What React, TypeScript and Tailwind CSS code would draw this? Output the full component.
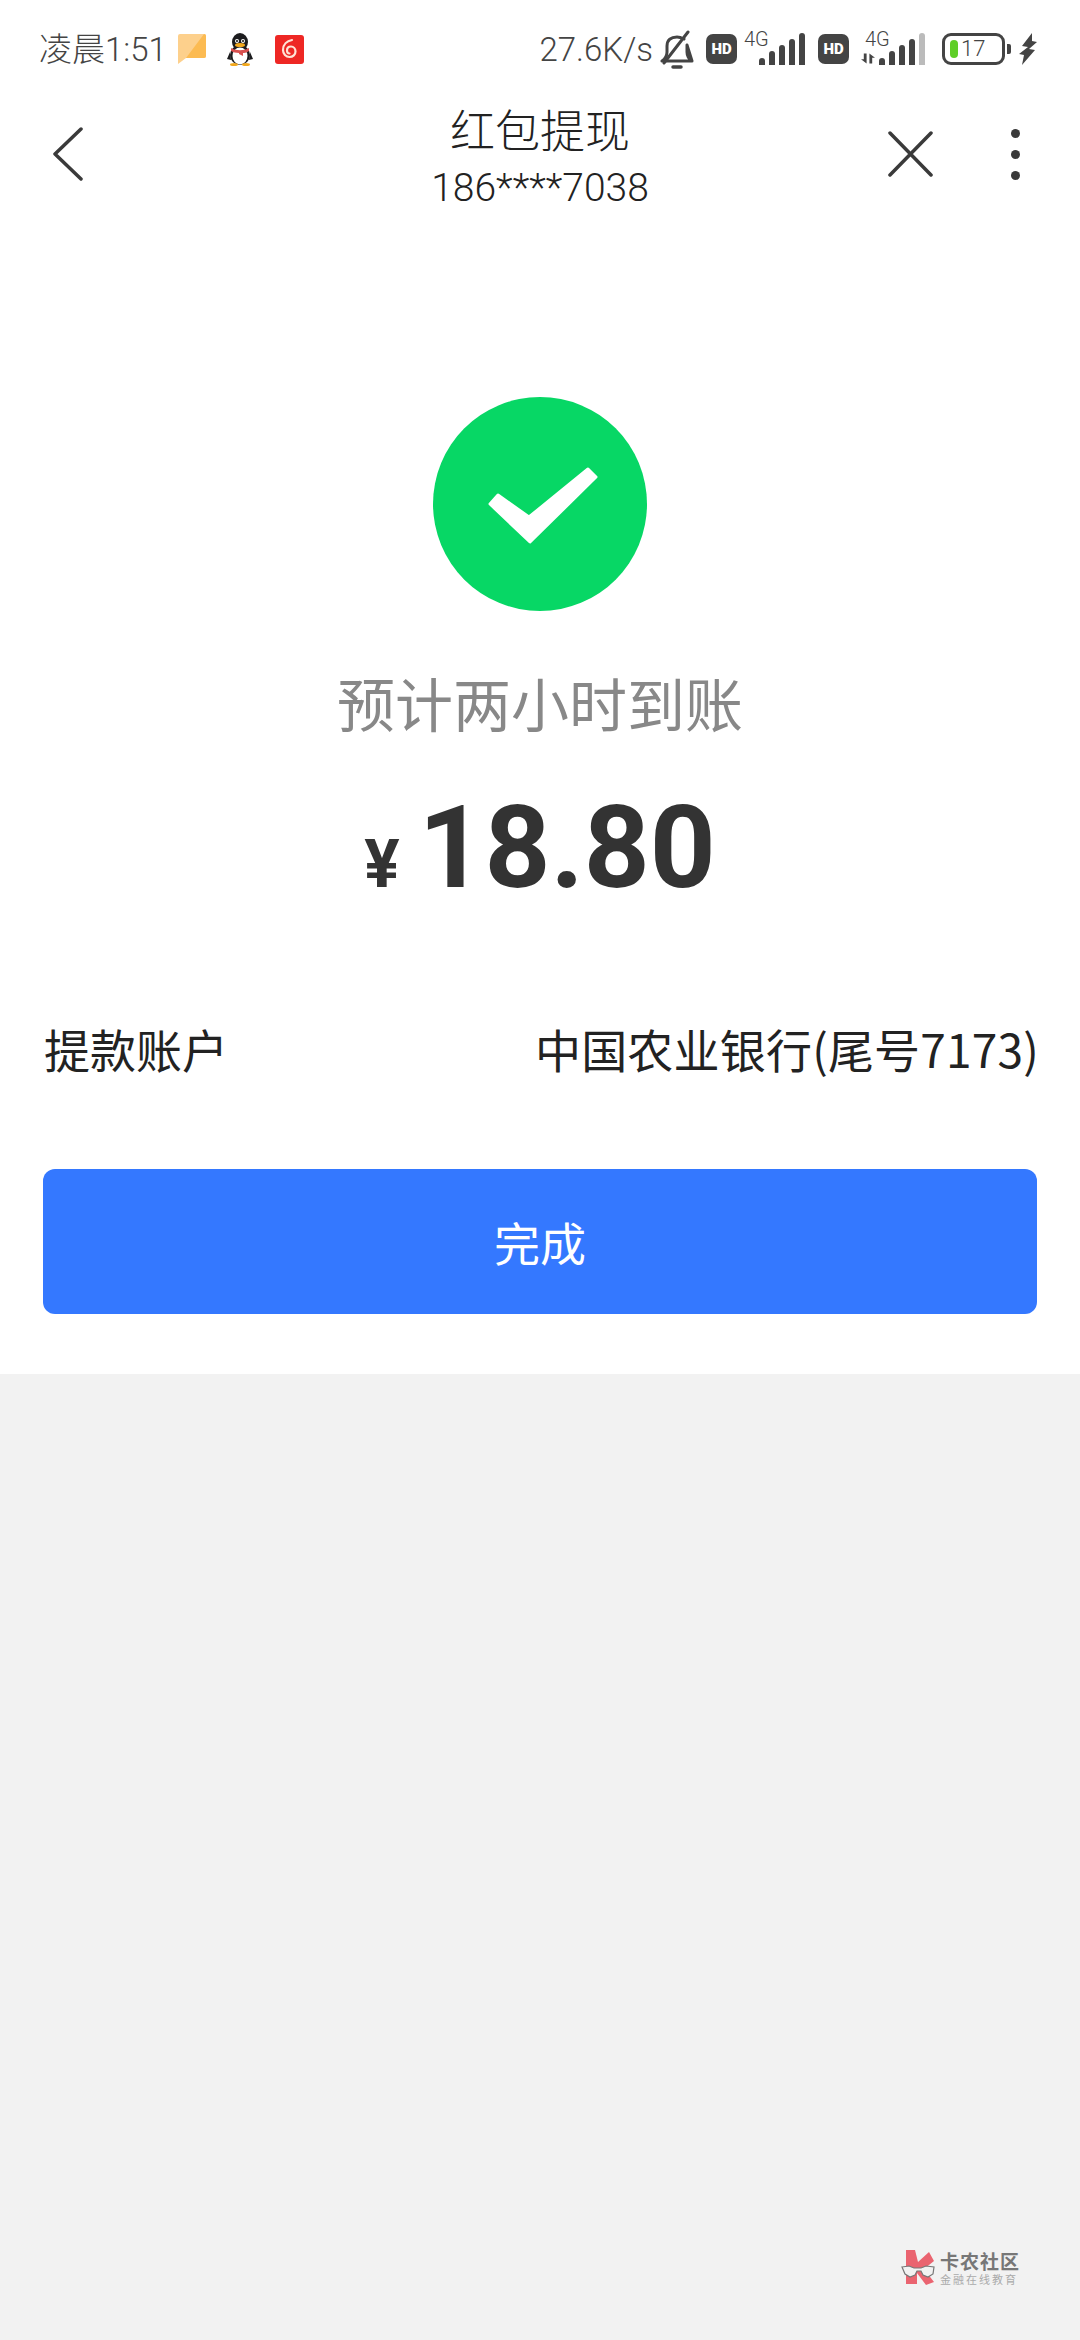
const signalBars = [7, 14, 20, 26, 32];

function HdBadge() {
  return (
    <div className="flex h-[30px] w-[31px] items-center justify-center rounded-[7px] bg-[#444] text-[15px] leading-none font-black text-white">
      HD
    </div>
  );
}

function Signal({ arrows, lastDim }: { arrows?: boolean; lastDim?: boolean }) {
  return (
    <div className="relative flex h-[32px] items-end gap-[4px]">
      <span className={arrows ? "absolute top-[-4px] left-[4px] text-[20px] leading-none font-light text-[#444]" : "absolute top-[-4px] left-[-15px] text-[20px] leading-none font-light text-[#444]"}>
        4G
      </span>
      {arrows && (
        <svg viewBox="0 0 20 14" className="mb-[1px] h-[11px] w-[14px]" fill="#444">
          <path d="M8 0v14L0 8h4V0zM12 0l8 6h-4v8h-4z" />
        </svg>
      )}
      {signalBars.map((h, i) => (
        <span
          key={i}
          className={lastDim && i === 4 ? "w-[6px] rounded-t-[3px] bg-[#bbb]" : "w-[6px] rounded-t-[3px] bg-[#444]"}
          style={{ height: h }}
        />
      ))}
    </div>
  );
}

function StatusBar() {
  return (
    <div className="flex h-[98px] items-center justify-between pr-[43px] pl-[39px] font-['Roboto','Noto_Sans_CJK_SC',sans-serif] text-[#444]">
      <div className="flex items-center">
        <span className="text-[33px] leading-none font-light">凌晨1:51</span>
        <svg viewBox="0 0 28 30" className="ml-[11px] h-[30px] w-[28px]">
          <path d="M2 0h24a2 2 0 0 1 2 2v20a2 2 0 0 1-2 2H8l-8 6V2a2 2 0 0 1 2-2z" fill="#fdd08c" />
          <path d="M26 0a2 2 0 0 1 2 2v20a2 2 0 0 1-2 2H8z" fill="#fcbb52" />
        </svg>
        <svg viewBox="0 0 26 33" className="ml-[21px] h-[33px] w-[26px]">
          <ellipse cx="13" cy="9" rx="8" ry="9" fill="#1c1c1e" />
          <ellipse cx="13" cy="22" rx="10" ry="10" fill="#1c1c1e" />
          <ellipse cx="13" cy="23" rx="7.500" ry="8.500" fill="#fff" />
          <circle cx="10" cy="8" r="2" fill="#fff" />
          <circle cx="16" cy="8" r="2" fill="#fff" />
          <circle cx="10" cy="8" r="1" fill="#111" />
          <circle cx="16" cy="8" r="1" fill="#111" />
          <ellipse cx="13" cy="12" rx="5" ry="2" fill="#f2a81d" />
          <path d="M4 15c5 3 13 3 18 0v3c-3 2-5 2-6 2v3l-4-2v-1c-3 0-6-1-8-2z" fill="#d8504f" />
          <ellipse cx="7" cy="31.500" rx="4" ry="1.500" fill="#f2a81d" />
          <ellipse cx="19" cy="31.500" rx="4" ry="1.500" fill="#f2a81d" />
          <path d="M3 19l-3 7 4 1zM23 19l3 7-4 1z" fill="#1c1c1e" />
        </svg>
        <svg viewBox="0 0 29 29" className="ml-[22px] h-[29px] w-[29px]">
          <rect width="29" height="29" rx="3" fill="#ee2724" />
          <path d="M17 5c-5 1-9 4.500-9 10 0 4 3 7 6.500 7s6-2.500 6-5.500-2-5-4.500-5-4 1.800-4 4c0 1.500 1 3 2.500 3" fill="none" stroke="#ffe3d6" strokeWidth="2.200" strokeLinecap="round" />
        </svg>
      </div>
      <div className="flex items-center">
        <span className="text-[33px] leading-none font-light">27.6K/s</span>
        <svg viewBox="0 0 34 39" className="ml-[7px] h-[39px] w-[34px]" fill="none" stroke="#444" strokeWidth="3" strokeLinecap="round" strokeLinejoin="round">
          <path d="M2 31c3-2 5-5 5-9v-6c0-6 4-9 10-9 3 0 5 1 7 2M27 15v7c0 4 2 7 5 9zM2 31h30" />
          <path d="M4 33L28 2" />
          <path d="M13 37h8" strokeWidth="3.500" />
        </svg>
        <div className="ml-[12px]">
          <HdBadge />
        </div>
        <div className="ml-[22px]">
          <Signal />
        </div>
        <div className="ml-[13px]">
          <HdBadge />
        </div>
        <div className="ml-[12px]">
          <Signal arrows lastDim />
        </div>
        <div className="ml-[17px] flex h-[32px] w-[63px] items-center rounded-[9px] border-[3px] border-[#444] pl-[5px]">
          <span className="h-[18px] w-[8px] rounded-[4px] bg-[#5fce27]" />
          <span className="ml-[3px] text-[22px] leading-none font-light">17</span>
        </div>
        <span className="ml-[2px] h-[10px] w-[4px] rounded-r-[2px] bg-[#444]" />
        <svg viewBox="0 0 18 32" className="ml-[8px] h-[32px] w-[18px]" fill="#444">
          <path d="M13 0L3 13l6 1-9 7 5 1-2 10 13-15-6-1 8-7-5-1z" />
        </svg>
      </div>
    </div>
  );
}

function NavBar() {
  return (
    <div className="relative flex h-[112px] items-center justify-between pr-[60px] pl-[53px]">
      <svg viewBox="0 0 30 54" className="h-[54px] w-[30px]" fill="none" stroke="#3a3a3a" strokeWidth="3.500" strokeLinecap="round" strokeLinejoin="round">
        <path d="M28 2L2 27l26 25" />
      </svg>
      <div className="absolute inset-x-0 top-[3px] flex flex-col items-center text-[#222]">
        <span className="text-[45px] leading-[56px] font-light">红包提现</span>
        <span className="mt-[6px] font-['Roboto','Noto_Sans_CJK_SC',sans-serif] text-[39px] leading-[50px] font-light">186****7038</span>
      </div>
      <div className="flex items-center">
        <svg viewBox="0 0 45 46" className="h-[46px] w-[45px]" fill="none" stroke="#3a3a3a" strokeWidth="3.500" strokeLinecap="round">
          <path d="M2 2l41 42M43 2L2 44" />
        </svg>
        <div className="ml-[78px] flex flex-col gap-[12px]">
          <span className="h-[9px] w-[9px] rounded-full bg-[#3a3a3a]" />
          <span className="h-[9px] w-[9px] rounded-full bg-[#3a3a3a]" />
          <span className="h-[9px] w-[9px] rounded-full bg-[#3a3a3a]" />
        </div>
      </div>
    </div>
  );
}

function Watermark() {
  return (
    <div className="flex items-center justify-end pt-[876px] pr-[60px]">
      <svg viewBox="0 0 36 36" className="h-[36px] w-[36px]">
        <path d="M5 0h9l3 12L28 2l5 9-10 8 10 13-8 3-9-12v11H5z" fill="#ea6470" />
        <path d="M1 17l7-1 5 2 7 0 5-2 8 1-1 7-5 3-5-2-2-4-4 0-2 4-5 2-5-3z" fill="#f2f2f2" stroke="#777" strokeWidth="1.200" />
      </svg>
      <div className="ml-[3px] flex flex-col items-start">
        <span className="text-[19px] leading-[22px] font-bold tracking-[1px] text-[#777]">卡农社区</span>
        <span className="text-[11px] leading-[14px] tracking-[2px] text-[#aaa]">金融在线教育</span>
      </div>
    </div>
  );
}

export default function App() {
  return (
    <div className="flex h-[2340px] w-[1080px] flex-col overflow-hidden bg-[#f2f2f2] font-['Noto_Sans_CJK_SC',sans-serif]">
      <div className="flex h-[1374px] flex-col bg-white">
        <StatusBar />
        <NavBar />

        <div className="mt-[187px] flex flex-col items-center">
          <div className="flex h-[214px] w-[214px] items-center justify-center rounded-full bg-[#07d765]">
            <svg viewBox="-2 -2 114 84" className="mt-[6px] ml-[5px] h-[84px] w-[114px]" fill="#fff" stroke="#fff" strokeWidth="3" strokeLinejoin="round">
              <path d="M10 28L2 37l40 38 66-65-8-8-59 48z" />
            </svg>
          </div>
          <p className="mt-[55px] text-[58px] leading-[72px] text-[#888]">预计两小时到账</p>
          <div className="mt-[48px] flex items-baseline font-['Roboto',sans-serif] font-bold text-[#333]">
            <span className="text-[66px] leading-none">¥</span>
            <span className="ml-[19px] text-[115px] leading-[124px]">18.80</span>
          </div>
        </div>

        <div className="mt-[108px] flex items-center justify-between pr-[41px] pl-[44px] text-[46px] leading-[60px] text-[#222]">
          <span>提款账户</span>
          <span className="tracking-[0.2px]">中国农业银行(尾号7173)</span>
        </div>

        <button className="mx-[43px] mt-[91px] flex h-[145px] items-center justify-center rounded-[12px] bg-[#3478ff] text-[46px] text-white">
          完成
        </button>
      </div>

      <Watermark />
    </div>
  );
}
